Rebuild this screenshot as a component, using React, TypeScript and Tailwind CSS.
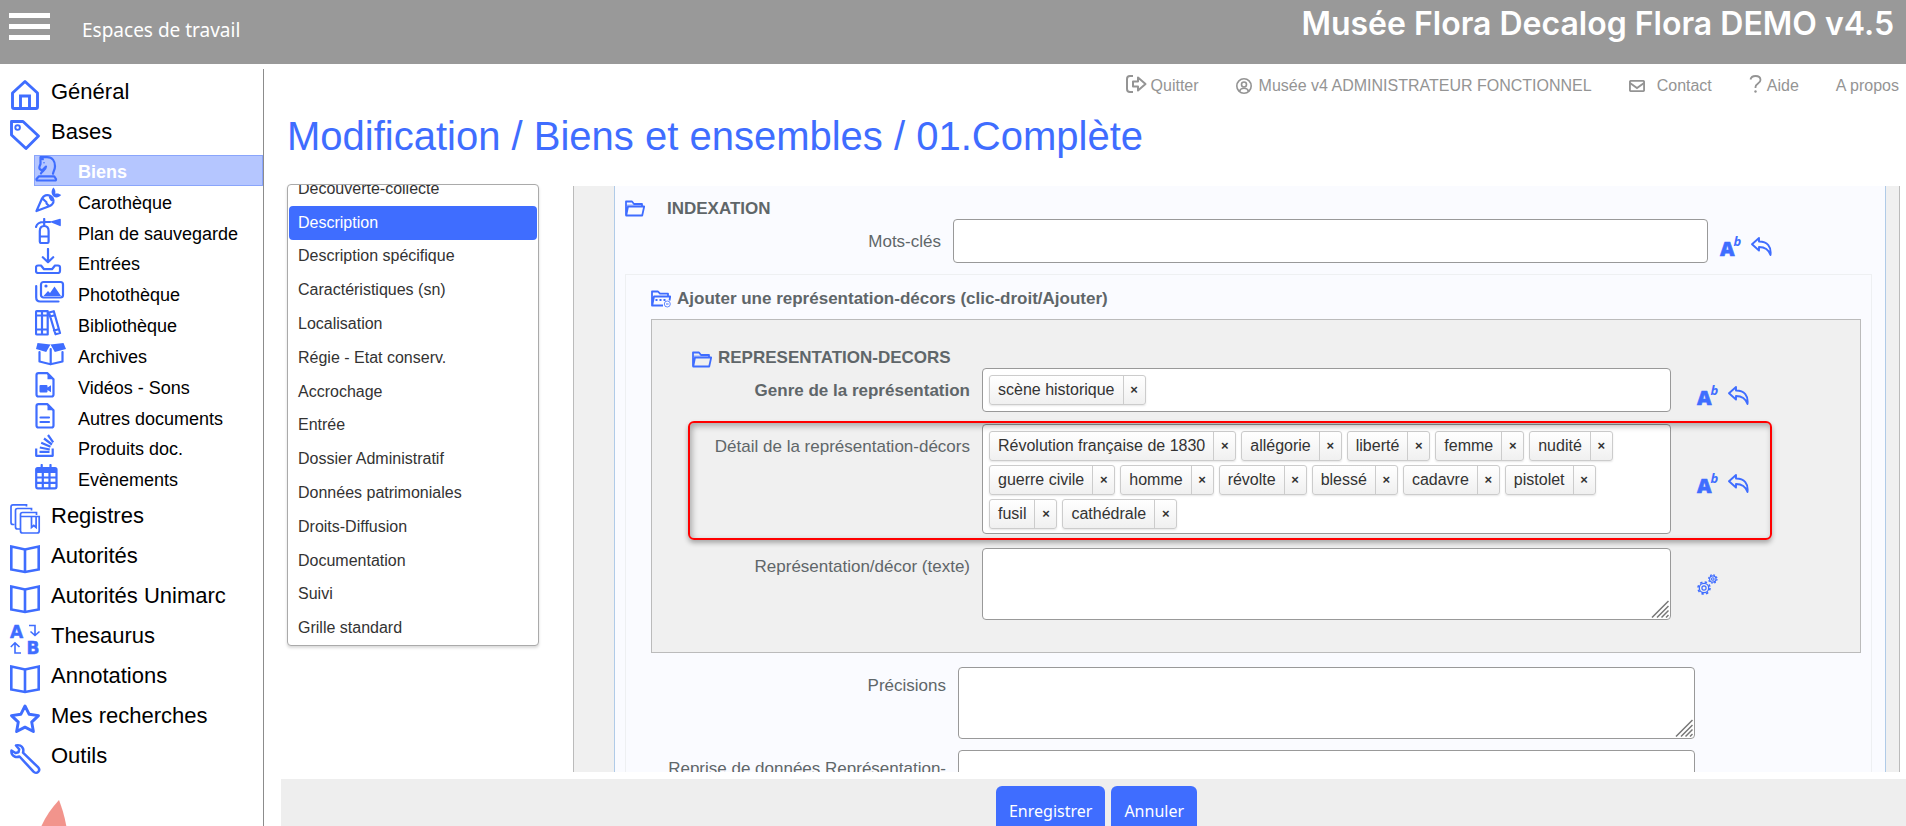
import { useState } from "react";
import type { ReactNode } from "react";

const sans = "font-['Liberation_Sans',Arial,sans-serif]";

function MainIcon({ children }: { children: ReactNode }) {
  return (
    <svg
      viewBox="0 0 30 30"
      className="mt-2 h-[30px] w-[30px] shrink-0 overflow-visible text-[#3f6dff]"
      fill="none"
      stroke="currentColor"
      strokeWidth="2.9"
      aria-hidden="true"
    >
      {children}
    </svg>
  );
}

function SubIcon({ children }: { children: ReactNode }) {
  return (
    <svg
      viewBox="0 0 32 26"
      className="h-[26px] w-8 shrink-0 text-[#3f6dff]"
      fill="none"
      stroke="currentColor"
      strokeWidth="2.2"
      strokeLinejoin="round"
      strokeLinecap="round"
      aria-hidden="true"
    >
      {children}
    </svg>
  );
}

const homeIcon = (
  <MainIcon>
    <path strokeLinejoin="round" d="M2.5 13 15 1.5 27.5 13v14q0 1.5-1.5 1.5H4Q2.500 28.500 2.500 27z" />
    <path d="M10.500 28V16h9v12" />
  </MainIcon>
);
const tagIcon = (
  <MainIcon>
    <path strokeLinejoin="round" d="M1.500 1.500h11.500L28.500 16 16 28.500 1.500 15z" />
    <circle cx="7.600" cy="7.600" r="2.300" strokeWidth="1.900" />
  </MainIcon>
);
const registerIcon = (
  <MainIcon>
    <g strokeWidth="1.700">
      <path d="M16.500 2.500V.8H3Q1 .8 1 3v15.500q0 2 2 2h1.500" />
      <path d="M21.500 6.500V4.500H7.500Q5.500 4.500 5.500 6.500V23q0 2 2 2H10" />
      <path d="M26.500 11V8.500H12.500q-2 0-2 2V27q0 2 2 2h14.700q2 0 2-2V12.500H11" />
      <path d="M21.500 12.500v11l2.300-2 2.300 2v-11" />
    </g>
  </MainIcon>
);
const bookIcon = (
  <MainIcon>
    <path strokeWidth="2.600" d="M1.300 2.500 15 5.500l13.700-3v23L15 28 1.300 25.500zM15 5.500V28" />
  </MainIcon>
);
const thesaurusIcon = (
  <MainIcon>
    <g fill="currentColor" stroke="currentColor" strokeWidth=".5" className="font-['DejaVu_Sans',sans-serif] text-[17px] font-bold">
      <text x="0" y="13.500">A</text>
      <text x="16.500" y="29.500">B</text>
    </g>
    <path strokeWidth="1.600" d="M19 1.500h6v10M20.500 7.500l4.500 4 4.500-4M11 29H5V19M.8 23 5 18.800 9.500 23" />
  </MainIcon>
);
const starIcon = (
  <MainIcon>
    <path strokeLinejoin="round" d="M15 2l4.200 8.300 9.300 1.300-6.800 6.500 1.700 9.400-8.400-4.400-8.400 4.400 1.700-9.400L1.500 11.600l9.300-1.300z" />
  </MainIcon>
);
const wrenchIcon = (
  <MainIcon>
    <path
      strokeWidth="2.500"
      strokeLinejoin="round"
      d="M6 1.500c3-1 6 .5 7 3 .6 1.700.4 3 0 4.200L28 23.200c1.500 1.600 1.300 3.600.2 4.700-1.200 1.200-3.300 1.200-4.700-.2L9.500 12.500c-1.500.7-3 .8-4.500.3-2.500-.8-4-3.500-3.500-6.300L5.500 9l3-.7.700-3z"
    />
  </MainIcon>
);

const fileShape = (
  <>
    <path d="M3.500 1.200h9l6 6v15.300q0 2-2 2h-13q-2 0-2-2V3.200q0-2 2-2z" />
    <path d="M12.500 1.200v6h6z" fill="currentColor" stroke="none" />
  </>
);

const knightIcon = (
  <SubIcon>
    <path d="M4 20.300h15.200l1.800 2.700q.3 1.500-1 1.500H2.500q-1.300 0-1-1.500z" />
    <path d="M6 17.500c.5-2 5-3.500 5-7L7 14.500l-2.300-1.500c-1-1.500 0-3 .8-5V1.200H12c5.500 0 8 4.300 8 9 0 3-1.500 5-2 7.500M5.500 1.200l2.300 2" />
    <circle cx="9" cy="6.700" r=".8" fill="currentColor" stroke="none" />
  </SubIcon>
);
const carrotIcon = (
  <SubIcon>
    <path d="M1.500 24 7 11.500c1.500-3 5-4.500 8.500-2.500 3.500 2 4 6 1.500 8.500-1 1-2 1.400-3.500 2zM8 12l3.500 3.200M14 19l-2.500-2.500M15 10.500l1.500 2.500" />
    <path
      d="M18.500 9.500c-3-3-2-7 0-9 1.700 1.700 2.300 4 1.700 6.200 2-.7 4.300-.2 6 1.300-2 2.200-5 3.300-7.700 1.500z"
      fill="currentColor"
      stroke="none"
    />
  </SubIcon>
);
const extinguisherIcon = (
  <SubIcon>
    <path d="M4.800 13c0-3.300 1.500-5 4.400-5s4.400 1.700 4.400 5v10.500q0 1.500-1.500 1.500H6.300q-1.500 0-1.500-1.500zM5 18.500h8.500M9.200 1v7M1 9c.8-3.500 3.500-5 8-5h6" />
    <path d="M14.500 3.800 25 .8q.8 0 .8 1v5.500q0 1-1 .8z" fill="currentColor" stroke="none" />
  </SubIcon>
);
const inboxIcon = (
  <SubIcon>
    <path d="M13 1v13M7.800 9.200 13 14.200l5.200-5M3 17.500H6l3 3.700h8l3-3.700h3q2 0 2 2V23q0 2-2 2H3q-2 0-2-2v-3.500q0-2 2-2z" />
  </SubIcon>
);
const photosIcon = (
  <SubIcon>
    <rect x="6" y="3" width="22" height="15.500" rx="2.500" />
    <path d="M1.200 7v11.500q0 4 4 4H23.500" />
    <path d="M8.500 17l4.500-5 2 2 4.500-6.500L26 17z" fill="currentColor" stroke="none" />
    <circle cx="11" cy="7" r="1.600" fill="currentColor" stroke="none" />
  </SubIcon>
);
const booksIcon = (
  <SubIcon>
    <path d="M2 1.200h10.700v23.300H2q-1 0-1-1V2.200q0-1 1-1zM7 1.200v23.300M1 5.500h11.700M1 19.500h11.700M14 2.500l4.800-1.300L25 23l-4.500 1.300zM15 6.500l4.800-1.200M19 20.500l4.800-1.300" />
  </SubIcon>
);
const boxIcon = (
  <SubIcon>
    <path d="M2.500 2 15.500 3.500l-4.300 7.500L1 8zM28.500 2 15.500 3.500l4.300 7.500L31 8z" fill="currentColor" stroke="none" />
    <path d="M4.500 11v9.500L15.500 23.300l12-2.800V11M15.700 8v15" />
  </SubIcon>
);
const videoIcon = (
  <SubIcon>
    {fileShape}
    <path d="M5.500 13h6q1 0 1 1v1.500l3.500-2.300v7L12.500 18v1.500q0 1-1 1h-6q-1 0-1-1V14q0-1 1-1z" fill="currentColor" stroke="none" />
  </SubIcon>
);
const documentIcon = (
  <SubIcon>
    {fileShape}
    <path d="M5.500 14.500h8.500M5.500 19h8.500" />
  </SubIcon>
);
const stackIcon = (
  <SubIcon>
    <path strokeLinecap="butt" d="M1.200 15.500v7.300h16.500v-7.300M4.500 18.800h10M4.800 14.500l10 2M6.200 9.800l9.300 4M9 5.500l8 6M13 2l5.200 7.300" />
  </SubIcon>
);
const calendarIcon = (
  <SubIcon>
    <path d="M1.200 5.500q0-1.500 1.500-1.500H20q1.500 0 1.500 1.500v17q0 1.800-1.500 1.800H2.700q-1.500 0-1.500-1.800zM6.700 1v3M15.500 1v3M1.200 13.500h20M1.200 18.800h20M7.800 8v16M14.500 8v16" />
    <path d="M1.200 4h20v5h-20z" fill="currentColor" stroke="none" />
  </SubIcon>
);

const bases: { label: string; icon: ReactNode; active?: boolean }[] = [
  { label: "Biens", icon: knightIcon, active: true },
  { label: "Carothèque", icon: carrotIcon },
  { label: "Plan de sauvegarde", icon: extinguisherIcon },
  { label: "Entrées", icon: inboxIcon },
  { label: "Photothèque", icon: photosIcon },
  { label: "Bibliothèque", icon: booksIcon },
  { label: "Archives", icon: boxIcon },
  { label: "Vidéos - Sons", icon: videoIcon },
  { label: "Autres documents", icon: documentIcon },
  { label: "Produits doc.", icon: stackIcon },
  { label: "Evènements", icon: calendarIcon },
];

const modules: { label: string; icon: ReactNode; children?: boolean }[] = [
  { label: "Général", icon: homeIcon },
  { label: "Bases", icon: tagIcon, children: true },
  { label: "Registres", icon: registerIcon },
  { label: "Autorités", icon: bookIcon },
  { label: "Autorités Unimarc", icon: bookIcon },
  { label: "Thesaurus", icon: thesaurusIcon },
  { label: "Annotations", icon: bookIcon },
  { label: "Mes recherches", icon: starIcon },
  { label: "Outils", icon: wrenchIcon },
];

function Sidebar() {
  return (
    <nav className="mt-[5px] w-[264px] shrink-0 overflow-hidden border-r border-[#8c8c8c] pt-[3px] text-black">
      <ul>
        {modules.map((m) => (
          <li key={m.label}>
            <a href="#" className="flex h-10 items-start gap-[11px] pl-[10px] text-[22px] leading-10">
              {m.icon}
              {m.label}
            </a>
            {m.children && (
              <ul className="mt-[3px] mb-[2px] grid h-[339px] auto-rows-fr pl-[34px]">
                {bases.map((b) => (
                  <li key={b.label}>
                    <a
                      href="#"
                      className={
                        b.active
                          ? "flex h-full gap-[11px] border border-[#8aa5fb] bg-[#b5c6ff] text-[18px] leading-[33px] font-bold text-white"
                          : "flex h-full gap-[11px] border border-transparent text-[18px] leading-[33px]"
                      }
                    >
                      {b.icon}
                      {b.label}
                    </a>
                  </li>
                ))}
              </ul>
            )}
          </li>
        ))}
      </ul>
      <svg viewBox="0 0 60 60" className="mt-6 ml-[34px] h-[60px] w-[60px]" aria-hidden="true">
        <path d="M25 0C12 14 2 32 2 50L34 60C36 40 32 18 25 0z" fill="#f2948c" />
      </svg>
    </nav>
  );
}

function TopLinks() {
  return (
    <div className="flex h-11 shrink-0 items-center justify-end gap-[37px] pr-[7px] text-[16px] leading-5 text-[#949494]">
      <a href="#" className="flex items-center gap-1">
        <svg viewBox="0 0 21 18" className="mb-1 h-[18px] w-[21px]" fill="none" stroke="currentColor" strokeWidth="2" aria-hidden="true">
          <path d="M7 1H4Q1 1 1 4v10q0 3 3 3h3M7 6.500h5V2.500L19.500 9 12 15.500v-4H7z" strokeLinejoin="round" />
        </svg>
        Quitter
      </a>
      <a href="#" className="flex items-center gap-[7px]">
        <svg viewBox="0 0 16 16" className="h-4 w-4" fill="none" stroke="currentColor" strokeWidth="1.600" aria-hidden="true">
          <circle cx="8" cy="8" r="7.200" />
          <circle cx="8" cy="6.500" r="2.500" />
          <path d="M3.500 13.300c.6-2.200 2-3 4.500-3s3.900.8 4.500 3" />
        </svg>
        Musée v4 ADMINISTRATEUR FONCTIONNEL
      </a>
      <a href="#" className="flex items-center gap-3">
        <svg viewBox="0 0 16 12" className="h-3 w-4" fill="none" stroke="currentColor" strokeWidth="1.900" aria-hidden="true">
          <rect x=".9" y=".9" width="14.200" height="10.200" rx="1.200" />
          <path d="M1 3l7 5 7-5" />
        </svg>
        Contact
      </a>
      <a href="#" className="flex items-center gap-[5px]">
        <svg viewBox="0 0 13 18" className="mb-1 h-[18px] w-[13px]" fill="none" stroke="currentColor" strokeWidth="1.800" aria-hidden="true">
          <path d="M1.500 4.500C2 2 4 1 6.500 1c3 0 5 1.500 5 4 0 3.500-5 3.500-5 7v1" />
          <circle cx="6.500" cy="16.500" r="1.200" fill="currentColor" stroke="none" />
        </svg>
        Aide
      </a>
      <a href="#">A propos</a>
    </div>
  );
}

const tabs = [
  "Découverte-collecte",
  "Description",
  "Description spécifique",
  "Caractéristiques (sn)",
  "Localisation",
  "Régie - Etat conserv.",
  "Accrochage",
  "Entrée",
  "Dossier Administratif",
  "Données patrimoniales",
  "Droits-Diffusion",
  "Documentation",
  "Suivi",
  "Grille standard",
];

function SectionList() {
  const [selected, setSelected] = useState("Description");
  return (
    <div className="mt-[-2px] ml-[6px] h-[462px] w-[252px] shrink-0 overflow-hidden rounded border border-[#aaa] bg-white px-px shadow-[0_2px_3px_rgba(0,0,0,0.15)]">
      <ul className="mt-[-13px] grid h-[473px] auto-rows-fr text-[16px] text-[#333]">
        {tabs.map((t) => (
          <li key={t}>
            <button
              type="button"
              onClick={() => setSelected(t)}
              className={
                t === selected
                  ? "flex h-full w-full items-center rounded bg-[#3f6dff] px-[9px] text-white"
                  : "flex h-full w-full items-center rounded px-[9px]"
              }
            >
              {t}
            </button>
          </li>
        ))}
      </ul>
    </div>
  );
}

function Folder() {
  return (
    <svg viewBox="0 0 20 17" className="h-[17px] w-5 shrink-0 text-[#3f6dff]" fill="none" stroke="currentColor" strokeWidth="1.800" strokeLinejoin="round" aria-hidden="true">
      <path d="M1 15.500V1.500h6l2 2.500h8v2.300M1.200 15.500 3 6.500h16.200l-2 9z" />
      <path d="M2 6V5h15" strokeWidth="1" opacity=".5" />
    </svg>
  );
}

function FolderAdd() {
  return (
    <svg viewBox="0 0 20 18" className="h-[18px] w-5 shrink-0 text-[#3f6dff]" fill="none" stroke="currentColor" strokeWidth="1.800" strokeLinejoin="round" aria-hidden="true">
      <path d="M12 15.500H1V1.500h6l2 2.200h8v2.300M1.200 15.500 3 6.500h16.200l-.7 4" />
      <path d="M4.500 10h12" strokeDasharray="2 2" />
      <circle cx="16.300" cy="14" r="3" strokeWidth="1" opacity=".8" />
      <path d="M15 14h2.600" strokeWidth="1" />
    </svg>
  );
}

function FieldTools() {
  return (
    <div className="flex items-center gap-[10px] text-[#3f6dff]">
      <button type="button" aria-label="Index">
        <svg viewBox="0 0 21 21" className="block h-[21px] w-[21px] overflow-visible" fill="currentColor" aria-hidden="true">
          <text x="0" y="20" className="font-['Open_Sans',sans-serif] text-[20px] font-extrabold" stroke="currentColor" strokeWidth=".6">A</text>
          <text x="13.500" y="10" className="font-['Open_Sans',sans-serif] text-[13px] font-bold italic">b</text>
        </svg>
      </button>
      <button type="button" aria-label="Rétablir">
        <svg viewBox="0 0 21 19" className="block h-[19px] w-[21px]" fill="none" stroke="currentColor" strokeWidth="1.900" strokeLinejoin="round" aria-hidden="true">
          <path d="M8 1 1 7.200l7 6.300V10c5.500 0 9.500 2 11.500 8C20.500 9.500 16.500 4.500 8 4.500z" />
        </svg>
      </button>
    </div>
  );
}

function Gears() {
  return (
    <svg viewBox="0 0 21 21" className="h-[21px] w-[21px] text-[#3f6dff]" fill="none" stroke="currentColor" aria-hidden="true">
      <circle cx="7" cy="14" r="4.700" strokeWidth="1.300" />
      <circle cx="7" cy="14" r="6" strokeWidth="1.600" strokeDasharray="2.400 2.310" />
      <circle cx="7" cy="14" r="2.100" strokeWidth="1.200" />
      <circle cx="15.800" cy="5" r="3.200" strokeWidth="1.200" />
      <circle cx="15.800" cy="5" r="4.200" strokeWidth="1.200" strokeDasharray="1.700 1.600" />
      <circle cx="15.800" cy="5" r="1.300" strokeWidth="1.100" />
    </svg>
  );
}

function TagField({ id, tags, className }: { id: string; tags: string[]; className: string }) {
  return (
    <div className={`flex flex-wrap content-start gap-x-[5px] gap-y-1 rounded border border-[#999] bg-white pr-3 pl-[6px] ${className}`}>
      {tags.map((t) => (
        <span
          key={t}
          className="flex h-[30px] rounded-[3px] border border-[#ccc] bg-linear-to-b from-white to-[#f0f0f0] text-[16px] leading-7 text-[#333] shadow-[0_1px_2px_rgba(0,0,0,0.1)]"
        >
          <span className="px-2">{t}</span>
          <button
            type="button"
            aria-label={`Retirer ${t}`}
            className="w-[22px] border-l border-[#ccc] text-[13px] leading-7 font-bold"
          >
            ×
          </button>
        </span>
      ))}
      <input id={id} className="h-[30px] w-4 outline-none" />
    </div>
  );
}

function Area({ id }: { id: string }) {
  return (
    <div className="relative h-[72px]">
      <textarea id={id} className="block h-full w-full resize-none rounded border border-[#999] bg-white p-1 outline-none" />
      <svg viewBox="0 0 18 18" className="pointer-events-none absolute right-[2px] bottom-[2px] h-[18px] w-[18px]" stroke="#777" strokeWidth="1.500" aria-hidden="true">
        <path d="M1 17.500 17.500 1M6 17.500 17.500 6M10.500 17.500l7-7M15 17.500l2.500-2.500" />
      </svg>
    </div>
  );
}

const subjects = [
  "Révolution française de 1830",
  "allégorie",
  "liberté",
  "femme",
  "nudité",
  "guerre civile",
  "homme",
  "révolte",
  "blessé",
  "cadavre",
  "pistolet",
  "fusil",
  "cathédrale",
];

function RecordForm() {
  return (
    <form className="ml-[34px] min-w-0 flex-1 overflow-hidden border-x border-[#bbb] bg-[#f0f0f0] pr-[13px] pl-10 text-[17px] leading-5 text-[#5f6669]">
      <div className="h-full border-x border-[#b0cbe8] bg-[#fafbff]">
        <h2 className="flex h-[33px] items-center gap-[22px] pt-3 pl-[10px] font-bold">
          <Folder />
          INDEXATION
        </h2>
        <div className="grid h-11 grid-cols-[338px_755fr_177fr]">
          <label htmlFor="keywords" className="pt-[13px] pr-3 text-right">Mots-clés</label>
          <input id="keywords" className="rounded border border-[#999] bg-white px-2 outline-none" />
          <div className="self-end pb-[6px] pl-3">
            <FieldTools />
          </div>
        </div>
        <div className="mt-[11px] mr-[13px] ml-[10px] border border-[#eef0f2]">
          <h2 className="flex h-11 items-center gap-[6px] pt-[3px] pl-[25px] font-bold">
            <FolderAdd />
            Ajouter une représentation-décors (clic-droit/Ajouter)
          </h2>
          <div className="mr-[10px] ml-[25px] border border-[#bbb] bg-[#f0f0f0] pb-8">
            <h3 className="flex h-12 items-end gap-[6px] pl-10 font-bold">
              <Folder />
              REPRESENTATION-DECORS
            </h3>
            <div className="grid grid-cols-[330px_689fr_189fr]">
              <label htmlFor="genre" className="pt-[13px] pr-3 text-right font-bold">Genre de la représentation</label>
              <TagField id="genre" tags={["scène historique"]} className="h-11 pt-[6px]" />
              <div className="self-end pb-[6px] pl-[26px]">
                <FieldTools />
              </div>
            </div>
            <div className="relative mt-3 grid grid-cols-[330px_689fr_189fr]">
              <label htmlFor="detail" className="pt-[13px] pr-3 text-right">Détail de la représentation-décors</label>
              <TagField id="detail" tags={subjects} className="pt-[6px] pb-1" />
              <div className="self-center pt-2 pl-[26px]">
                <FieldTools />
              </div>
              <div className="pointer-events-none absolute -top-[3px] right-[88px] -bottom-[6px] left-9 rounded-md border-2 border-[#f00] shadow-[0_3px_5px_rgba(0,0,0,0.3),inset_2px_3px_6px_rgba(0,0,0,0.3)]" />
            </div>
            <div className="mt-[14px] grid grid-cols-[330px_689fr_189fr]">
              <label htmlFor="text" className="pt-[9px] pr-3 text-right">Représentation/décor (texte)</label>
              <Area id="text" />
              <button type="button" aria-label="Assistant" className="self-center justify-self-start pl-[26px]">
                <Gears />
              </button>
            </div>
          </div>
          <div className="mt-[14px] grid grid-cols-[332px_737fr_176fr]">
            <label htmlFor="details" className="pt-[9px] pr-3 text-right">Précisions</label>
            <Area id="details" />
          </div>
          <div className="mt-[11px] grid grid-cols-[332px_737fr_176fr]">
            <label htmlFor="import" className="pt-[9px] pr-3 text-right">
              Reprise de données Représentation-décors
            </label>
            <Area id="import" />
          </div>
        </div>
      </div>
    </form>
  );
}

export default function App() {
  return (
    <div className={`flex h-screen flex-col overflow-hidden bg-white ${sans}`}>
      <header className="flex h-16 shrink-0 items-start justify-between bg-[#999] pr-3 pl-[9px] text-white">
        <div className="flex items-start gap-8">
          <button type="button" aria-label="Menu" className="mt-[13px] grid gap-[6px]">
            <span className="h-[5px] w-[41px] bg-white" />
            <span className="h-[5px] w-[41px] bg-white" />
            <span className="h-[5px] w-[41px] bg-white" />
          </button>
          <span className="mt-4 font-['Noto_Sans',sans-serif] text-[19px] leading-7">Espaces de travail</span>
        </div>
        <p className="mt-1 font-['Inter',sans-serif] text-[32px] leading-10 font-semibold">Musée Flora Decalog Flora DEMO v4.5</p>
      </header>
      <div className="flex min-h-0 flex-1">
        <Sidebar />
        <main className="ml-[17px] flex min-w-0 flex-1 flex-col">
          <TopLinks />
          <h1 className="h-[78px] shrink-0 pl-[6px] text-[40px] leading-[56px] text-[#3f6dff]">
            Modification / Biens et ensembles / 01.Complète
          </h1>
          <div className="flex min-h-0 flex-1 pr-[6px]">
            <SectionList />
            <RecordForm />
          </div>
          <div className="mt-[7px] flex h-[47px] shrink-0 justify-center gap-[6px] overflow-hidden bg-[#eee] pt-[7px] pl-[6px] font-['Noto_Sans',sans-serif] text-[16px] text-white">
            <button type="button" className="h-[50px] rounded-md bg-[#3f6dff] px-[13px]">Enregistrer</button>
            <button type="button" className="h-[50px] rounded-md bg-[#3f6dff] px-[13px]">Annuler</button>
          </div>
        </main>
      </div>
    </div>
  );
}
